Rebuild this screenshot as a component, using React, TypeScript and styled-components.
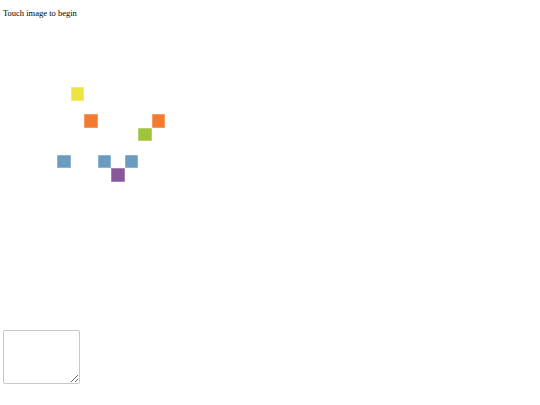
import React from 'react';
import styled, {createGlobalStyle} from 'styled-components';

const GlobalStyle = createGlobalStyle`
  html, body {
    margin: 0;
    padding: 0;
    background: #ffffff;
  }
  body {
    font-family: "Liberation Serif", "DejaVu Serif", serif;
  }
`;

const StyledPage = styled.main`
  display: flex;
  flex-direction: column;
  padding: 7px 3px 0 3px;
  width: 540px;
  height: 405px;
  box-sizing: border-box;
`;

const StyledPrompt = styled.p`
  margin: 0;
  font-size: 8.5px;
  line-height: 12px;
  color: #000000;
`;

const StyledStage = styled.section`
  height: 311px;
  padding: 68px 0 0 54px;
  box-sizing: border-box;
`;

const StyledBoard = styled.div`
  display: grid;
  grid-template-columns: repeat(8, 13.5px);
  grid-template-rows: repeat(7, 13.5px);
`;

const StyledTile = styled.div<{$col: number; $row: number; $color: string}>`
  grid-column: ${(p) => p.$col + 1};
  grid-row: ${(p) => p.$row + 1};
  background: ${(p) => p.$color};
  box-shadow: inset 0 0 0 0.5px rgba(255, 255, 255, 0.5);
`;

const StyledInput = styled.textarea`
  width: 77px;
  height: 54px;
  box-sizing: border-box;
  margin: 0;
  border: 1px solid #c8c8c8;
  border-radius: 2px;
  resize: both;
`;

const tiles = [
  {col: 1, row: 0, color: '#eee441'},
  {col: 2, row: 2, color: '#f27b2f'},
  {col: 7, row: 2, color: '#f27b2f'},
  {col: 6, row: 3, color: '#a0c33b'},
  {col: 0, row: 5, color: '#6a9bc0'},
  {col: 3, row: 5, color: '#6a9bc0'},
  {col: 5, row: 5, color: '#6a9bc0'},
  {col: 4, row: 6, color: '#87599a'},
];

const App = () => {
  return (
    <>
      <GlobalStyle />
      <StyledPage>
        <StyledPrompt>Touch image to begin</StyledPrompt>
        <StyledStage>
          <StyledBoard>
            {tiles.map((t, i) => (
              <StyledTile key={i} $col={t.col} $row={t.row} $color={t.color} />
            ))}
          </StyledBoard>
        </StyledStage>
        <StyledInput />
      </StyledPage>
    </>
  );
};

export default App;
